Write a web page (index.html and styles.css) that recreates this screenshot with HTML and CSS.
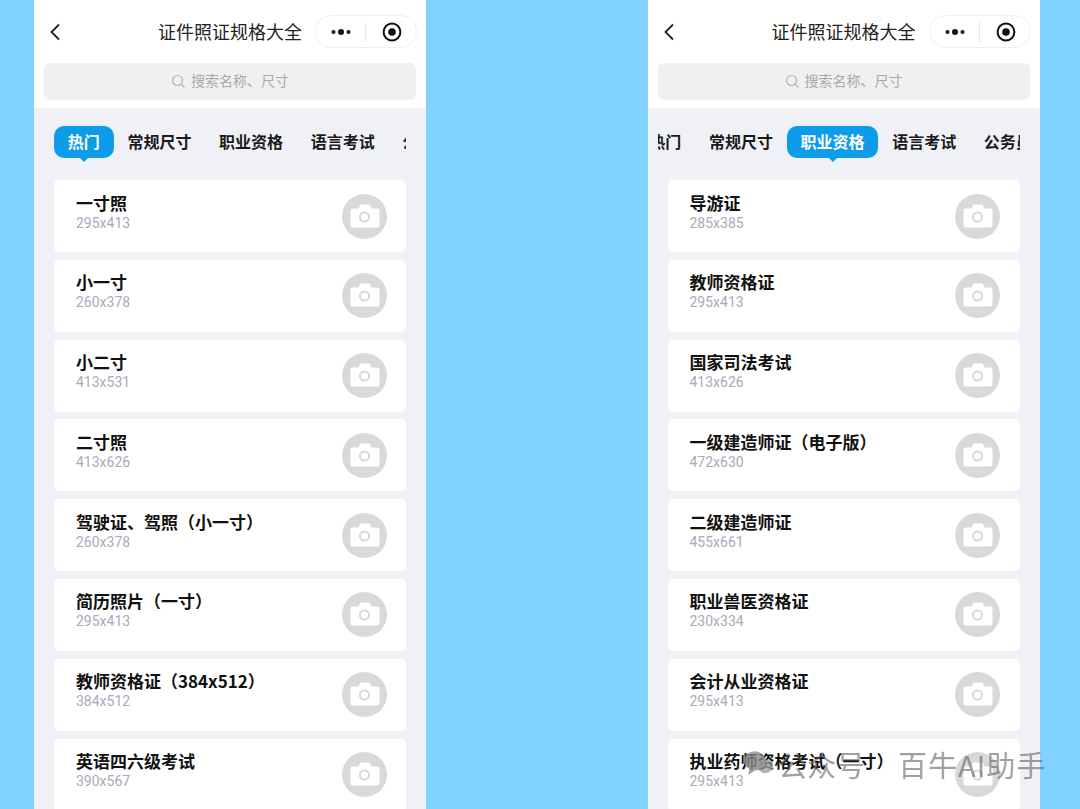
FILE: index.html
```html
<!DOCTYPE html>
<html lang="zh-CN">
<head>
    <meta charset="UTF-8">
    <meta name="viewport" content="width=device-width, initial-scale=1.0">
    <title>证件照证规格大全</title>
    <link rel="stylesheet" href="styles.css">
</head>
<body>
    <svg class="defs" width="0" height="0">
        <symbol id="camera" viewBox="0 0 45 45">
            <circle cx="22.5" cy="22.5" r="22.5" fill="#d9d9d9"/>
            <path d="M8.5 16.5a2 2 0 0 1 2-2h6l2-4h9l2 4h6a2 2 0 0 1 2 2v15a2 2 0 0 1-2 2h-25a2 2 0 0 1-2-2z" fill="#fff"/>
            <circle cx="22.5" cy="23" r="4.6" fill="none" stroke="#d9d9d9" stroke-width="2"/>
        </symbol>
    </svg>

    <div class="phone">
        <div class="header">
            <div class="navbar">
                <svg class="back" width="12" height="18" viewBox="0 0 12 18"><path d="M10 1.5 2.5 9l7.5 7.5" fill="none" stroke="#222" stroke-width="1.8"/></svg>
                <div class="nav-title">证件照证规格大全</div>
                <div class="capsule">
                    <svg class="capsule-more" width="20" height="8" viewBox="0 0 20 8"><circle cx="2.5" cy="4" r="2" fill="#111"/><circle cx="10" cy="4" r="3" fill="#111"/><circle cx="17.5" cy="4" r="2" fill="#111"/></svg>
                    <span class="capsule-line"></span>
                    <svg class="capsule-close" width="20" height="20" viewBox="0 0 20 20"><circle cx="10" cy="10" r="8.4" fill="none" stroke="#111" stroke-width="2"/><circle cx="10" cy="10" r="3.8" fill="#111"/></svg>
                </div>
            </div>
            <div class="search">
                <svg width="15" height="15" viewBox="0 0 15 15"><circle cx="6.5" cy="6.5" r="5" fill="none" stroke="#b5b5b5" stroke-width="1.2"/><path d="m10.2 10.2 3.3 3.3" stroke="#b5b5b5" stroke-width="1.2"/></svg>
                <span class="search-text">搜索名称、尺寸</span>
            </div>
        </div>
        <div class="main">
            <div class="tabs">
                <div class="tab-row">
                    <div class="tab tab-active">热门</div>
                    <div class="tab">常规尺寸</div>
                    <div class="tab">职业资格</div>
                    <div class="tab">语言考试</div>
                    <div class="tab">公务员</div>
                </div>
            </div>
            <div class="list">
                <div class="card"><div><div class="card-name">一寸照</div><div class="card-size">295x413</div></div><svg class="card-icon"><use href="#camera"/></svg></div>
                <div class="card"><div><div class="card-name">小一寸</div><div class="card-size">260x378</div></div><svg class="card-icon"><use href="#camera"/></svg></div>
                <div class="card"><div><div class="card-name">小二寸</div><div class="card-size">413x531</div></div><svg class="card-icon"><use href="#camera"/></svg></div>
                <div class="card"><div><div class="card-name">二寸照</div><div class="card-size">413x626</div></div><svg class="card-icon"><use href="#camera"/></svg></div>
                <div class="card"><div><div class="card-name">驾驶证、驾照（小一寸）</div><div class="card-size">260x378</div></div><svg class="card-icon"><use href="#camera"/></svg></div>
                <div class="card"><div><div class="card-name">简历照片（一寸）</div><div class="card-size">295x413</div></div><svg class="card-icon"><use href="#camera"/></svg></div>
                <div class="card"><div><div class="card-name">教师资格证（384x512）</div><div class="card-size">384x512</div></div><svg class="card-icon"><use href="#camera"/></svg></div>
                <div class="card"><div><div class="card-name">英语四六级考试</div><div class="card-size">390x567</div></div><svg class="card-icon"><use href="#camera"/></svg></div>
            </div>
        </div>
    </div>

    <div class="phone">
        <div class="header">
            <div class="navbar">
                <svg class="back" width="12" height="18" viewBox="0 0 12 18"><path d="M10 1.5 2.5 9l7.5 7.5" fill="none" stroke="#222" stroke-width="1.8"/></svg>
                <div class="nav-title">证件照证规格大全</div>
                <div class="capsule">
                    <svg class="capsule-more" width="20" height="8" viewBox="0 0 20 8"><circle cx="2.5" cy="4" r="2" fill="#111"/><circle cx="10" cy="4" r="3" fill="#111"/><circle cx="17.5" cy="4" r="2" fill="#111"/></svg>
                    <span class="capsule-line"></span>
                    <svg class="capsule-close" width="20" height="20" viewBox="0 0 20 20"><circle cx="10" cy="10" r="8.4" fill="none" stroke="#111" stroke-width="2"/><circle cx="10" cy="10" r="3.8" fill="#111"/></svg>
                </div>
            </div>
            <div class="search">
                <svg width="15" height="15" viewBox="0 0 15 15"><circle cx="6.5" cy="6.5" r="5" fill="none" stroke="#b5b5b5" stroke-width="1.2"/><path d="m10.2 10.2 3.3 3.3" stroke="#b5b5b5" stroke-width="1.2"/></svg>
                <span class="search-text">搜索名称、尺寸</span>
            </div>
        </div>
        <div class="main">
            <div class="tabs">
                <div class="tab-row tab-row-scrolled">
                    <div class="tab">热门</div>
                    <div class="tab">常规尺寸</div>
                    <div class="tab tab-active">职业资格</div>
                    <div class="tab">语言考试</div>
                    <div class="tab">公务员</div>
                </div>
            </div>
            <div class="list">
                <div class="card"><div><div class="card-name">导游证</div><div class="card-size">285x385</div></div><svg class="card-icon"><use href="#camera"/></svg></div>
                <div class="card"><div><div class="card-name">教师资格证</div><div class="card-size">295x413</div></div><svg class="card-icon"><use href="#camera"/></svg></div>
                <div class="card"><div><div class="card-name">国家司法考试</div><div class="card-size">413x626</div></div><svg class="card-icon"><use href="#camera"/></svg></div>
                <div class="card"><div><div class="card-name">一级建造师证（电子版）</div><div class="card-size">472x630</div></div><svg class="card-icon"><use href="#camera"/></svg></div>
                <div class="card"><div><div class="card-name">二级建造师证</div><div class="card-size">455x661</div></div><svg class="card-icon"><use href="#camera"/></svg></div>
                <div class="card"><div><div class="card-name">职业兽医资格证</div><div class="card-size">230x334</div></div><svg class="card-icon"><use href="#camera"/></svg></div>
                <div class="card"><div><div class="card-name">会计从业资格证</div><div class="card-size">295x413</div></div><svg class="card-icon"><use href="#camera"/></svg></div>
                <div class="card"><div><div class="card-name">执业药师资格考试（一寸）</div><div class="card-size">295x413</div></div><svg class="card-icon"><use href="#camera"/></svg></div>
            </div>
        </div>
    </div>

    <div class="watermark">
        <svg width="32" height="28" viewBox="0 0 30 26"><ellipse cx="11" cy="10" rx="10" ry="9" fill="#8a8a8a" opacity="0.8"/><path d="M6 17l-1 6 6-4z" fill="#8a8a8a" opacity="0.8"/><ellipse cx="21" cy="15" rx="7.5" ry="6.5" fill="#9a9a9a" opacity="0.75"/></svg>
        <span class="watermark-channel">公众号</span>
        <span class="watermark-name">百牛AI助手</span>
    </div>
</body>
</html>
```

FILE: styles.css
```css
html, body {
    height: 100%;
}
body {
    position: relative;
    display: flex;
    gap: 221.5px;
    margin: 0;
    padding-left: 34px;
    height: 809px;
    overflow: hidden;
    background-color: #82d2ff;
    font-family: "Noto Sans CJK SC", "Noto Sans", sans-serif;
    color: #111;
}
.defs {
    position: absolute;
}
.phone {
    display: flex;
    flex-direction: column;
    flex: none;
    width: 392px;
    height: 809px;
    overflow: hidden;
    background-color: #f0f1f6;
}
.header {
    flex: none;
    height: 108px;
    padding: 15px 10px 0;
    box-sizing: border-box;
    background-color: #fff;
}
.navbar {
    display: flex;
    align-items: center;
    height: 33px;
}
.back {
    flex: none;
    margin-left: 5px;
}
.nav-title {
    margin-left: 97px;
    font-size: 18px;
    line-height: 33px;
    color: #222;
    white-space: nowrap;
}
.capsule {
    display: flex;
    flex: none;
    align-items: center;
    box-sizing: border-box;
    width: 102px;
    height: 33px;
    margin-left: 13px;
    padding-left: 15px;
    border: 1px solid #eceef1;
    border-radius: 17px;
}
.capsule-line {
    width: 1px;
    height: 20px;
    margin: 0 16px 0 14px;
    background-color: #e8e8e8;
}
.search {
    display: flex;
    align-items: center;
    justify-content: center;
    gap: 5px;
    height: 37px;
    margin-top: 15px;
    border-radius: 6px;
    background-color: #f0f0f0;
    font-size: 14px;
    color: #a9a9a9;
}
.search-text {
    margin-bottom: 3px;
}
.main {
    flex: 1;
    padding-top: 18px;
}
.tabs {
    height: 37px;
    margin: 0 20px 0 10px;
    overflow: hidden;
}
.tab-row {
    display: flex;
    padding-left: 10px;
}
.tab-row-scrolled {
    margin-left: -32px;
}
.tab {
    position: relative;
    flex: none;
    height: 32px;
    padding: 0 13.8px;
    border-radius: 10px;
    font-size: 16px;
    font-weight: 700;
    line-height: 30px;
    color: #1a1a1a;
}
.tab-active {
    background-color: #0d9ce9;
    color: #fff;
}
.tab-active::after {
    content: "";
    position: absolute;
    left: 50%;
    bottom: -4px;
    margin-left: -5px;
    border-top: 5px solid #0d9ce9;
    border-left: 5px solid transparent;
    border-right: 5px solid transparent;
}
.list {
    display: flex;
    flex-direction: column;
    gap: 7.8px;
    margin: 17px 20px 0;
}
.card {
    display: flex;
    flex: none;
    align-items: center;
    justify-content: space-between;
    box-sizing: border-box;
    height: 72px;
    padding: 0 19.5px 0 22px;
    border-radius: 5px;
    background-color: #fff;
}
.card-name {
    font-size: 17px;
    font-weight: 700;
    line-height: 20px;
    color: #111;
}
.card-size {
    margin-top: 2px;
    margin-bottom: 8px;
    font-family: Roboto, sans-serif;
    font-size: 14px;
    line-height: 17px;
    color: #a9a9ba;
}
.card-icon {
    flex: none;
    width: 45px;
    height: 45px;
}
.watermark {
    position: absolute;
    left: 743px;
    top: 743px;
    display: flex;
    align-items: center;
    font-size: 29px;
    line-height: 42px;
    color: rgba(95, 95, 95, 0.6);
    white-space: nowrap;
}
.watermark-channel {
    margin-left: 3px;
}
.watermark-name {
    margin-left: 33px;
    letter-spacing: 1px;
}
```
